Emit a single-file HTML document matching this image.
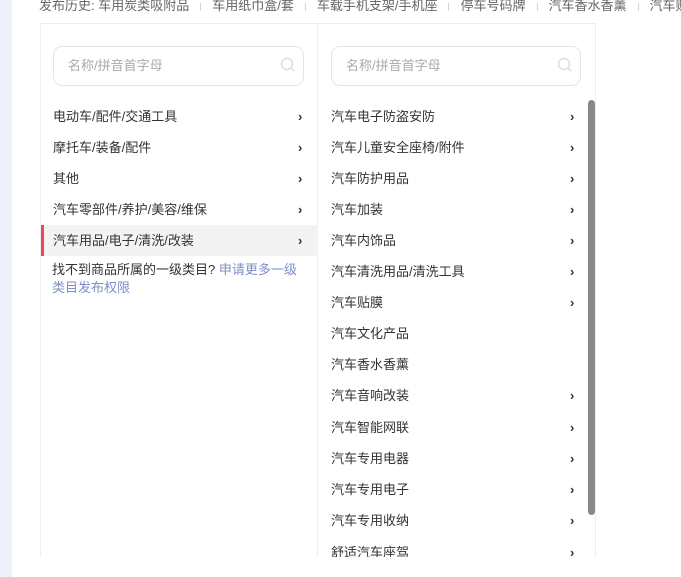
<!DOCTYPE html>
<html><head><meta charset="utf-8"><style>
*{margin:0;padding:0;box-sizing:border-box}
body{width:681px;height:577px;overflow:hidden;background:#fff;font-family:"Liberation Sans","Noto Sans CJK SC",sans-serif;font-size:13px;color:#333;position:relative}
.strip{position:absolute;left:0;top:0;width:12px;height:577px;background:#eef0f8}
.hist{position:absolute;left:39px;top:-3px;white-space:nowrap;color:#666;font-size:13px;line-height:18px}
.hist .sep{display:inline-block;width:1px;height:8px;background:#d5d5d5;margin:0 11px;vertical-align:middle}
.panel{position:absolute;left:40px;top:23px;width:556px;height:534px;border:1px solid #eee;border-bottom:none;overflow:hidden}
.col{position:absolute;top:0;height:100%}
.left{left:0;width:277px;border-right:1px solid #eee}
.right{left:277px;width:278px}
.search{position:absolute;top:22px;height:40px;border:1px solid #e4e4ea;border-radius:9px;color:#aaa;font-size:13px;line-height:38px;padding-left:14px}
.search svg{position:absolute;right:7px;top:10px}
.row{position:absolute;height:31px;line-height:31px;white-space:nowrap}
.arr{position:absolute;font-size:13px;font-weight:bold;color:#333}
.sel{background:#f3f3f3}
.bar{position:absolute;left:0;top:0;width:3px;height:31px;background:#f0445f}
.note{position:absolute;left:11px;top:237px;width:250px;line-height:18px;color:#333}
.note span{color:#7e90c8}
.scroll{position:absolute;left:547px;top:76px;width:7px;height:415px;background:#888;border-radius:4px}
</style></head><body>
<div class="strip"></div>
<div class="hist">发布历史: 车用炭类吸附品<span class="sep"></span>车用纸巾盒/套<span class="sep"></span>车载手机支架/手机座<span class="sep"></span>停车号码牌<span class="sep"></span>汽车香水香薰<span class="sep"></span>汽车贴膜</div>
<div class="panel">
 <div class="col left">
  <div class="search" style="left:12px;width:251px">名称/拼音首字母<svg width="16" height="16" viewBox="0 0 16 16"><circle cx="7" cy="7" r="5.5" fill="none" stroke="#ddd" stroke-width="1.5"/><path d="M11 11l3 3" stroke="#ddd" stroke-width="1.5"/></svg></div>
  <div class="row" style="top:77px;left:0;width:277px;padding-left:12px">电动车/配件/交通工具<span class="arr" style="left:257px">›</span></div>
  <div class="row" style="top:108px;left:0;width:277px;padding-left:12px">摩托车/装备/配件<span class="arr" style="left:257px">›</span></div>
  <div class="row" style="top:139px;left:0;width:277px;padding-left:12px">其他<span class="arr" style="left:257px">›</span></div>
  <div class="row" style="top:170px;left:0;width:277px;padding-left:12px">汽车零部件/养护/美容/维保<span class="arr" style="left:257px">›</span></div>
  <div class="row sel" style="top:201px;left:0;width:277px;padding-left:12px"><div class="bar"></div>汽车用品/电子/清洗/改装<span class="arr" style="left:257px">›</span></div>
  <div class="note">找不到商品所属的一级类目? <span>申请更多一级类目发布权限</span></div>
 </div>
 <div class="col right">
  <div class="search" style="left:13px;width:250px">名称/拼音首字母<svg width="16" height="16" viewBox="0 0 16 16"><circle cx="7" cy="7" r="5.5" fill="none" stroke="#ddd" stroke-width="1.5"/><path d="M11 11l3 3" stroke="#ddd" stroke-width="1.5"/></svg></div>
  <div class="row" style="top:77px;left:13px">汽车电子防盗安防<span class="arr" style="left:239px">›</span></div>
  <div class="row" style="top:108px;left:13px">汽车儿童安全座椅/附件<span class="arr" style="left:239px">›</span></div>
  <div class="row" style="top:139px;left:13px">汽车防护用品<span class="arr" style="left:239px">›</span></div>
  <div class="row" style="top:170px;left:13px">汽车加装<span class="arr" style="left:239px">›</span></div>
  <div class="row" style="top:201px;left:13px">汽车内饰品<span class="arr" style="left:239px">›</span></div>
  <div class="row" style="top:232px;left:13px">汽车清洗用品/清洗工具<span class="arr" style="left:239px">›</span></div>
  <div class="row" style="top:263px;left:13px">汽车贴膜<span class="arr" style="left:239px">›</span></div>
  <div class="row" style="top:294px;left:13px">汽车文化产品</div>
  <div class="row" style="top:325px;left:13px">汽车香水香薰</div>
  <div class="row" style="top:356px;left:13px">汽车音响改装<span class="arr" style="left:239px">›</span></div>
  <div class="row" style="top:388px;left:13px">汽车智能网联<span class="arr" style="left:239px">›</span></div>
  <div class="row" style="top:419px;left:13px">汽车专用电器<span class="arr" style="left:239px">›</span></div>
  <div class="row" style="top:450px;left:13px">汽车专用电子<span class="arr" style="left:239px">›</span></div>
  <div class="row" style="top:481px;left:13px">汽车专用收纳<span class="arr" style="left:239px">›</span></div>
  <div class="row" style="top:513px;left:13px">舒适汽车座驾<span class="arr" style="left:239px">›</span></div>
 </div>
 <div class="scroll"></div>
</div>
</body></html>
